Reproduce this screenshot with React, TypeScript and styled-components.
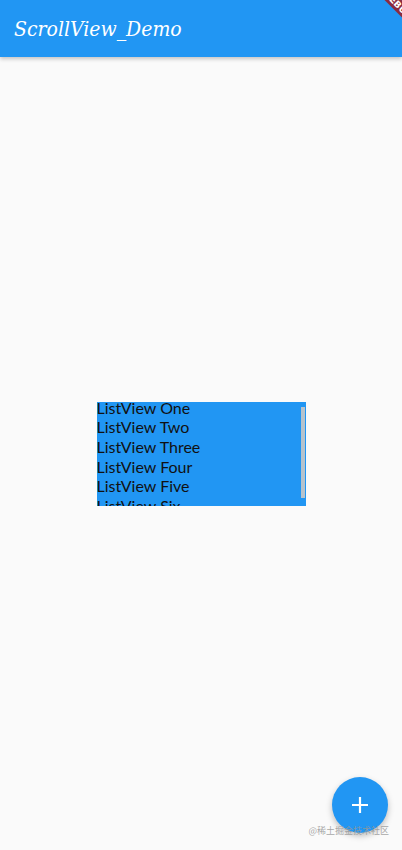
import styled, { createGlobalStyle } from "styled-components";

const GlobalStyle = createGlobalStyle`
  html, body {
    margin: 0;
    padding: 0;
    background: #fafafa;
  }
  #root {
    min-height: 850px;
  }
`;

const Screen = styled.div`
  position: relative;
  width: 402px;
  height: 850px;
  overflow: hidden;
  background: #fafafa;
  display: flex;
  flex-direction: column;
`;

const AppBar = styled.header`
  height: 57px;
  flex-shrink: 0;
  background: #2196f3;
  display: flex;
  align-items: center;
  padding: 0 14px;
  box-shadow: 0 2px 4px rgba(0, 0, 0, 0.22);
  z-index: 1;
`;

const Title = styled.h1`
  margin: 0;
  font-family: "DejaVu Serif", "Liberation Serif", serif;
  font-stretch: condensed;
  font-style: italic;
  font-weight: 400;
  font-size: 21px;
  color: #fff;
`;

const Body = styled.main`
  flex: 1;
  display: flex;
  align-items: center;
  justify-content: center;
`;

const ListBox = styled.div`
  position: relative;
  width: 209px;
  height: 104px;
  background: #2196f3;
  overflow: hidden;
`;

const List = styled.ul`
  list-style: none;
  margin: -4px 0 0;
  padding: 0;
`;

const Item = styled.li`
  font-family: Lato, "Noto Sans", sans-serif;
  font-size: 16px;
  line-height: 19.7px;
  color: #111;
`;

const Scrollbar = styled.div`
  position: absolute;
  right: 1px;
  top: 5px;
  width: 4px;
  height: 91px;
  background: rgba(200, 200, 200, 0.9);
`;

const Banner = styled.div`
  position: absolute;
  top: -1px;
  right: -41px;
  width: 90px;
  height: 12px;
  background: #8c2b3e;
  transform: rotate(45deg);
  color: #fff;
  font-family: "DejaVu Sans", sans-serif;
  font-weight: 700;
  font-size: 9px;
  line-height: 12px;
  text-align: center;
  z-index: 2;
`;

const Fab = styled.button`
  position: absolute;
  right: 14px;
  bottom: 17px;
  width: 56px;
  height: 56px;
  border-radius: 50%;
  border: none;
  background: #2196f3;
  box-shadow: 0 3px 6px rgba(0, 0, 0, 0.25);
  display: flex;
  align-items: center;
  justify-content: center;
  padding: 0;
`;

const Watermark = styled.div`
  position: absolute;
  right: 13px;
  bottom: 13px;
  font-family: "Noto Sans CJK SC", sans-serif;
  font-size: 9px;
  color: rgba(150, 150, 150, 0.85);
`;

const items = ["One", "Two", "Three", "Four", "Five", "Six", "Seven", "Eight"];

export default function App() {
  return (
    <>
      <GlobalStyle />
      <Screen>
        <AppBar>
          <Title>ScrollView_Demo</Title>
        </AppBar>
        <Banner>DEBUG</Banner>
        <Body>
          <ListBox>
            <List>
              {items.map((n) => (
                <Item key={n}>ListView {n}</Item>
              ))}
            </List>
            <Scrollbar />
          </ListBox>
        </Body>
        <Fab aria-label="add">
          <svg width="20" height="20" viewBox="0 0 20 20">
            <path d="M10 2v16M2 10h16" stroke="#fff" strokeWidth="2.2" />
          </svg>
        </Fab>
        <Watermark>@稀土掘金技术社区</Watermark>
      </Screen>
    </>
  );
}
